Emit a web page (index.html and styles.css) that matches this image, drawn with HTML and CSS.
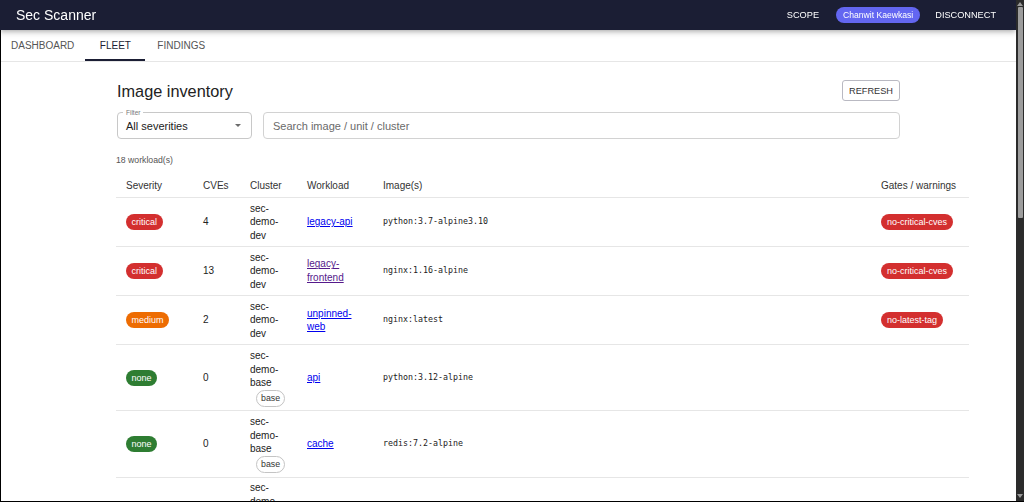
FILE: index.html
```html
<!DOCTYPE html>
<html lang="en">
<head>
<meta charset="utf-8">
<title>Sec Scanner</title>
<link rel="stylesheet" href="styles.css">
</head>
<body>
<div class="shell">
<div class="viewport">
<header class="appbar">
  <div class="brand">Sec Scanner</div>
  <nav class="actions">
    <button class="nav-btn">Scope</button>
    <span class="user-chip">Chanwit Kaewkasi</span>
    <button class="nav-btn">Disconnect</button>
  </nav>
</header>
<nav class="tabs">
  <a class="tab">Dashboard</a>
  <a class="tab active">Fleet</a>
  <a class="tab">Findings</a>
</nav>
<main class="page">
  <div class="head">
    <h1>Image inventory</h1>
    <button class="refresh">REFRESH</button>
  </div>
  <div class="filters">
    <div class="select">
      <span class="select-label">Filter</span>
      <span class="select-value">All severities</span>
      <svg class="caret" width="6" height="3" viewBox="0 0 6 3"><path d="M0 0h6L3 3z" fill="#6b6b6b"/></svg>
    </div>
    <input class="search" type="text" placeholder="Search image / unit / cluster">
  </div>
  <div class="count">18 workload(s)</div>
  <table class="grid">
    <colgroup>
      <col class="c-sev"><col class="c-cve"><col class="c-cluster"><col class="c-wl"><col class="c-img"><col class="c-gate">
    </colgroup>
    <thead>
      <tr><th>Severity</th><th>CVEs</th><th>Cluster</th><th>Workload</th><th>Image(s)</th><th>Gates / warnings</th></tr>
    </thead>
    <tbody>
      <tr><td><span class="sev critical">critical</span></td><td>4</td><td>sec-demo-dev</td><td><a href="#" class="wl">legacy-api</a></td><td class="img">python:3.7-alpine3.10</td><td><span class="gate">no-critical-cves</span></td></tr>
      <tr><td><span class="sev critical">critical</span></td><td>13</td><td>sec-demo-dev</td><td><a href="#" class="wl visited">legacy-frontend</a></td><td class="img">nginx:1.16-alpine</td><td><span class="gate">no-critical-cves</span></td></tr>
      <tr><td><span class="sev medium">medium</span></td><td>2</td><td>sec-demo-dev</td><td><a href="#" class="wl">unpinned-web</a></td><td class="img">nginx:latest</td><td><span class="gate">no-latest-tag</span></td></tr>
      <tr><td><span class="sev none">none</span></td><td>0</td><td>sec-demo-base <span class="chip-base">base</span></td><td><a href="#" class="wl">api</a></td><td class="img">python:3.12-alpine</td><td></td></tr>
      <tr><td><span class="sev none">none</span></td><td>0</td><td>sec-demo-base <span class="chip-base">base</span></td><td><a href="#" class="wl">cache</a></td><td class="img">redis:7.2-alpine</td><td></td></tr>
      <tr><td></td><td></td><td>sec-demo-base <span class="chip-base">base</span></td><td></td><td></td><td></td></tr>
    </tbody>
  </table>
</main>
</div>
<div class="vscroll" aria-hidden="true">
  <svg class="arrow" width="6" height="4" viewBox="0 0 6 4"><path d="M0 4L3 0L6 4z" fill="#9a9a9a"/></svg>
  <div class="thumb"></div>
  <div class="track-rest"></div>
  <svg class="arrow" width="6" height="4" viewBox="0 0 6 4"><path d="M0 0L3 4L6 0z" fill="#9a9a9a"/></svg>
</div>
</div>
<div class="frame"></div>
</body>
</html>
```
FILE: styles.css
```css
html, body {
  margin: 0;
  height: 100%;
  background: #fff;
}
body {
  color: #222;
  font-family: "Liberation Sans", Arial, sans-serif;
  overflow: hidden;
}

.shell {
  display: flex;
  height: 100vh;
}
.viewport {
  flex: 1;
  min-width: 0;
  overflow: hidden;
}
.vscroll {
  width: 8px;
  background: #2b2b2b;
  display: flex;
  flex-direction: column;
  align-items: center;
  padding: 2px 0 4px;
  box-sizing: border-box;
}
.arrow {
  flex: none;
}
.thumb {
  flex: none;
  width: 5px;
  height: 211px;
  margin-top: 1px;
  background: #9d9d9d;
  border-radius: 1px;
}
.track-rest {
  flex: 1;
}

.appbar {
  position: relative;
  z-index: 1;
  height: 30px;
  background: #1b1e34;
  display: flex;
  align-items: center;
  justify-content: space-between;
  padding: 0 20px 0 16px;
  box-shadow: 0 2px 4px -1px rgba(0,0,0,.22), 0 4px 5px 0 rgba(0,0,0,.12);
}
.brand {
  color: #fff;
  font-size: 14px;
}
.actions {
  display: flex;
  align-items: center;
}
.nav-btn {
  font-family: inherit;
  font-size: 9.2px;
  color: #fff;
  background: none;
  border: 0;
  padding: 0;
  text-transform: uppercase;
}
.user-chip {
  margin: 0 15px 0 17px;
  background: #6366f1;
  color: #fff;
  font-size: 8.6px;
  height: 16px;
  line-height: 16px;
  padding: 0 7px;
  border-radius: 8px;
}

.tabs {
  display: flex;
  height: 31px;
  border-bottom: 1px solid #e6e6e6;
}
.tab {
  min-width: 60px;
  box-sizing: border-box;
  padding: 0 11px;
  display: flex;
  align-items: center;
  justify-content: center;
  font-size: 10px;
  color: #555;
  text-transform: uppercase;
}
.tab.active {
  color: #1b1e34;
  box-shadow: inset 0 -2px 0 #1b1e34;
}
.tab:last-child {
  padding-left: 12px;
}

.page {
  width: 784px;
  margin: 0 auto;
  padding: 18px 0 40px;
}
.head {
  display: flex;
  justify-content: space-between;
  align-items: flex-end;
}
.head h1 {
  margin: 0 0 0 1px;
  font-size: 16.3px;
  font-weight: 400;
  line-height: 19px;
  color: #222;
}
.refresh {
  font-family: inherit;
  font-size: 9.2px;
  height: 21px;
  padding: 0 6px;
  border: 1px solid #b9b9c2;
  border-radius: 3px;
  background: #fff;
  color: #333;
}

.filters {
  display: flex;
  gap: 11px;
  margin: 11px 0 0 1px;
}
.select {
  position: relative;
  width: 135px;
  height: 27px;
  box-sizing: border-box;
  border: 1px solid #c8c8c8;
  border-radius: 4px;
  display: flex;
  align-items: center;
  justify-content: space-between;
  padding: 0 10px 0 8px;
  font-size: 11px;
  color: #222;
}
.select-label {
  position: absolute;
  top: -5px;
  left: 5px;
  padding: 0 3px;
  background: #fff;
  font-size: 6.5px;
  line-height: 9px;
  color: #777;
}
.search {
  flex: 1;
  height: 27px;
  box-sizing: border-box;
  border: 1px solid #d2d2d2;
  border-radius: 4px;
  padding: 0 9px;
  font-family: inherit;
  font-size: 11px;
  color: #222;
  background: #fff;
  outline: none;
}
.search::placeholder {
  color: #6a6a6a;
}

.count {
  margin-top: 16px;
  font-size: 8.7px;
  line-height: 10px;
  color: #555;
}

.grid {
  margin-top: 9px;
  width: 853px;
  table-layout: fixed;
  border-collapse: collapse;
  font-size: 10px;
}
.c-sev { width: 77px; }
.c-cve { width: 47px; }
.c-cluster { width: 57px; }
.c-wl { width: 76px; }
.c-img { width: 498px; }
.c-gate { width: 98px; }

.grid th {
  height: 23px;
  padding: 0 10px;
  text-align: left;
  font-weight: 400;
  color: #333;
  border-bottom: 1px solid #e6e6e6;
}
.grid td {
  padding: 3.5px 10px;
  line-height: 13.7px;
  color: #222;
  vertical-align: middle;
  border-bottom: 1px solid #e6e6e6;
}
.wl {
  color: #0000ee;
}
.wl.visited {
  color: #551a8b;
}
.grid td.img {
  font-family: "DejaVu Sans Mono", monospace;
  font-size: 8.3px;
}

.sev,
.gate {
  display: inline-block;
  height: 16px;
  line-height: 16px;
  padding: 0 5.5px;
  border-radius: 8px;
  font-size: 9px;
  color: #fff;
  vertical-align: middle;
}
.gate {
  padding: 0 6px;
  background: #d32f2f;
}
.sev.critical { background: #d32f2f; }
.sev.medium { background: #ed6c02; }
.sev.none { background: #2e7d32; }

.chip-base {
  display: inline-block;
  margin-left: 6px;
  height: 17px;
  line-height: 15px;
  box-sizing: border-box;
  border: 1px solid #c4c4c4;
  border-radius: 9px;
  padding: 0 4px;
  font-size: 8.8px;
  color: #333;
  vertical-align: middle;
}

.frame {
  position: fixed;
  inset: 0;
  border-left: 1px solid #000;
  border-bottom: 1px solid #000;
  pointer-events: none;
}
```
